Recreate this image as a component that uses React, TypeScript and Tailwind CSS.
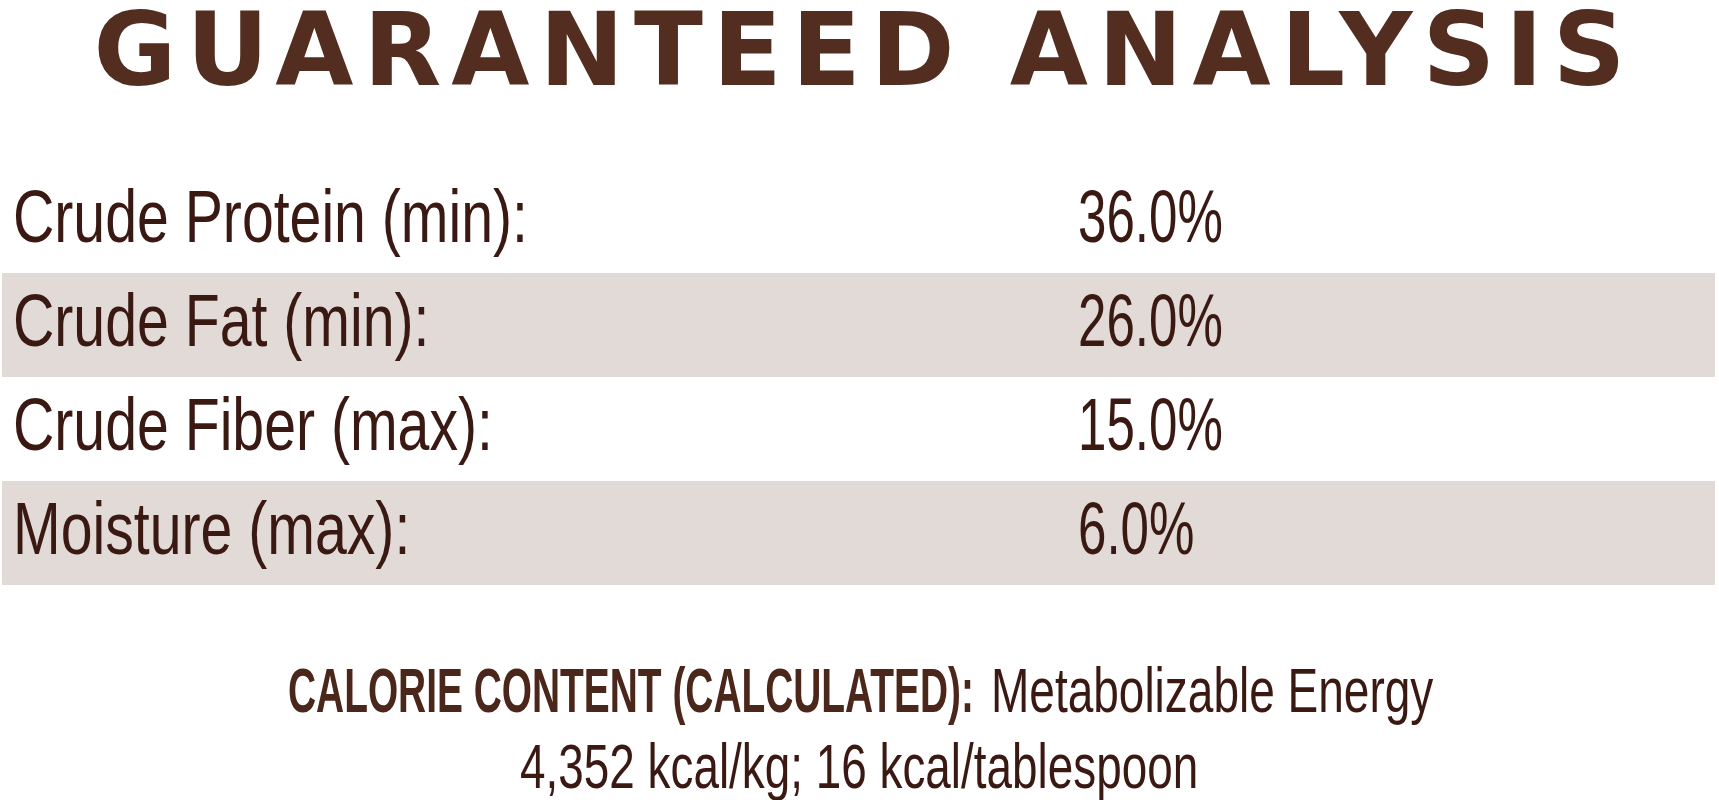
import React from 'react';

const rows = [
  { label: 'Crude Protein (min):', value: '36.0%', shaded: false },
  { label: 'Crude Fat (min):', value: '26.0%', shaded: true },
  { label: 'Crude Fiber (max):', value: '15.0%', shaded: false },
  { label: 'Moisture (max):', value: '6.0%', shaded: true },
];

const App: React.FC = () => {
  return (
    <div className="w-[1719px] min-h-[800px] bg-white font-['Liberation_Sans',Arial,sans-serif]">
      {/* Title */}
      <h1 className="-mt-[9px] text-center pl-[10px] font-['DejaVu_Sans',sans-serif] text-[101px] leading-[118px] font-bold tracking-[10px] text-[#532e20] whitespace-nowrap">
        GUARANTEED ANALYSIS
      </h1>

      {/* Analysis table */}
      <div className="mt-[60px] ml-[2px] mr-[4px]">
        {rows.map(row => (
          <div
            key={row.label}
            className={`flex h-[104px] pl-[11px] pb-[8px] text-[74px] leading-[96px] text-[#3b1913] ${
              row.shaded ? 'bg-[#e1dad6]' : 'bg-white'
            }`}
          >
            <div className="w-[1065px] shrink-0">
              <div className="origin-left scale-x-[0.773] whitespace-nowrap">{row.label}</div>
            </div>
            <div className="origin-left scale-x-[0.69] whitespace-nowrap">{row.value}</div>
          </div>
        ))}
      </div>

      {/* Calorie content */}
      <div className="mt-[67px] text-[63px] leading-[76px] text-[#3b1913]">
        <div className="flex justify-center gap-[15px]">
          <div className="w-[688px] shrink-0">
            <div className="origin-left scale-x-[0.617] whitespace-nowrap font-bold text-[#4b261a]">
              CALORIE CONTENT (CALCULATED):
            </div>
          </div>
          <div className="w-[441px] shrink-0">
            <div className="origin-left scale-x-[0.73] whitespace-nowrap">Metabolizable Energy</div>
          </div>
        </div>
        <div className="flex justify-center">
          <div className="w-[679px] shrink-0">
            <div className="origin-left scale-x-[0.728] whitespace-nowrap">
              4,352 kcal/kg; 16 kcal/tablespoon
            </div>
          </div>
        </div>
      </div>
    </div>
  );
};

export default App;
